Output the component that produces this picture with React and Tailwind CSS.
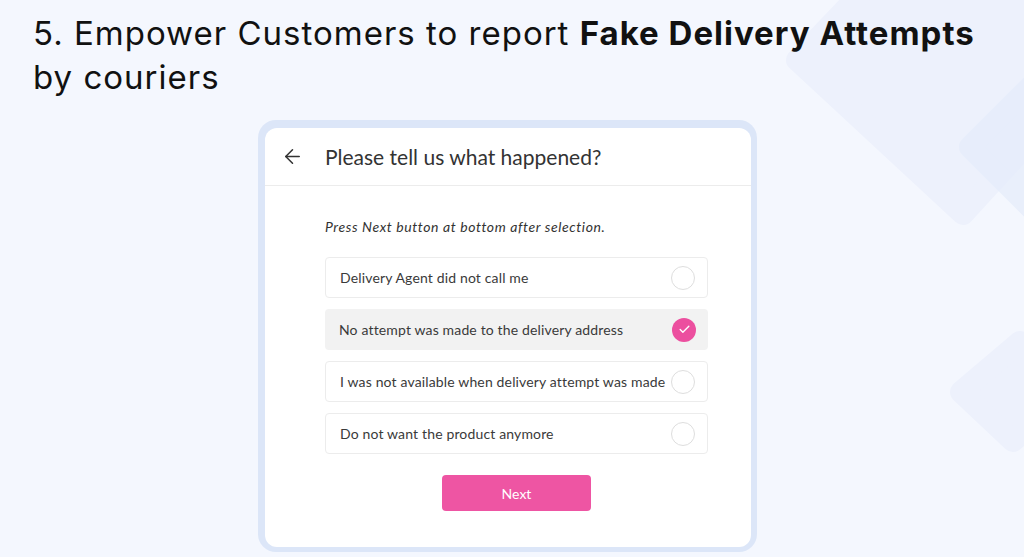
import { ArrowLeft, Check } from 'lucide-react'
import clsx from 'clsx'

const options = [
  { label: 'Delivery Agent did not call me' },
  { label: 'No attempt was made to the delivery address', selected: true },
  { label: 'I was not available when delivery attempt was made' },
  { label: 'Do not want the product anymore' },
]

function Backdrop() {
  return (
    <svg className="absolute inset-0 h-full w-full" viewBox="0 0 1024 557" preserveAspectRatio="none">
      <g strokeLinejoin="round" strokeWidth="22">
        <polygon points="797,60 952,-102 1114,49 963,214" fill="#edf1fc" stroke="#edf1fc" />
        <polygon points="970,147 1085,32 1200,150 1085,262" fill="#e5ecfb" stroke="#e5ecfb" opacity="0.7" />
        <polygon points="961,392 1020,342 1071,391 1013,441" fill="#edf1fc" stroke="#edf1fc" />
      </g>
    </svg>
  )
}

function Option({ label, selected }) {
  return (
    <div
      className={clsx(
        'flex h-[41px] items-center justify-between rounded-[4px] pl-[14px] pr-[12px]',
        selected ? 'bg-[#f2f2f2]' : 'border border-[#ececec] bg-white'
      )}
    >
      <span className="text-[14px] tracking-[0.15px] text-[#3a3a3a]">{label}</span>
      {selected ? (
        <span className="flex h-[24px] w-[24px] items-center justify-center rounded-full bg-[#ec4f9f]">
          <Check size={13} strokeWidth={2.5} className="text-white" />
        </span>
      ) : (
        <span className="h-[24px] w-[24px] rounded-full border-[1.5px] border-[#dedede]" />
      )}
    </div>
  )
}

export default function App() {
  return (
    <div className="relative h-[557px] w-full overflow-hidden bg-[#f4f7fe]">
      <Backdrop />
      <div className="relative">
        <h1 className="pl-[33px] pt-[11px] font-['Inter',sans-serif] text-[33px] leading-[44px] tracking-[1px] text-[#111]">
          5. Empower Customers to report <span className="font-bold">Fake Delivery Attempts</span>
          <br />
          by couriers
        </h1>

        <div className="ml-[258px] mt-[21px] h-[432px] w-[499px] rounded-[18px] bg-[#dce6f8] pb-[5px] pl-[7px] pr-[6px] pt-[8px] font-['Lato',sans-serif]">
          <div className="h-full rounded-[12px] bg-white">
            <div className="flex h-[58px] items-center border-b border-[#ececec] pl-[16px]">
              <ArrowLeft size={23} strokeWidth={1.6} className="text-[#333]" />
              <span className="ml-[21px] text-[21px] text-[#333]">Please tell us what happened?</span>
            </div>

            <div className="ml-[60px] w-[383px] pt-[32px]">
              <p className="text-[14px] italic leading-[18px] tracking-[0.6px] text-[#333]">
                Press Next button at bottom after selection.
              </p>
              <div className="mt-[21px] flex flex-col gap-[11px]">
                {options.map((o) => (
                  <Option key={o.label} {...o} />
                ))}
              </div>
              <div className="mt-[21px] flex justify-center">
                <button className="h-[36px] w-[149px] rounded-[4px] bg-[#ee55a3] text-[14px] text-white">
                  Next
                </button>
              </div>
            </div>
          </div>
        </div>
      </div>
    </div>
  )
}
